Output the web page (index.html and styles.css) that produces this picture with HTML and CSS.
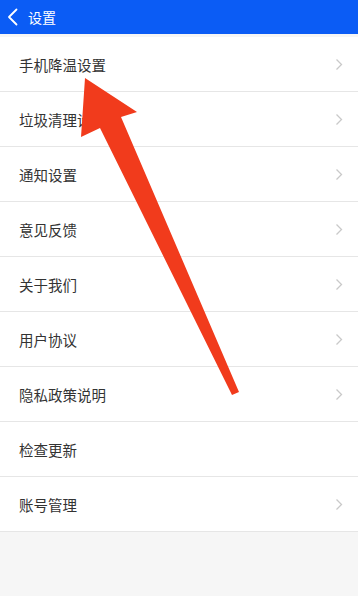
FILE: index.html
```html
<!DOCTYPE html>
<html lang="zh">
<head>
<meta charset="utf-8">
<title>设置</title>
<link rel="stylesheet" href="styles.css">
</head>
<body>
<div class="screen">
  <header class="topbar">
    <svg class="back" width="12" height="18" viewBox="0 0 12 18"><polyline points="9.5,1.5 2,9 9.5,16.5" fill="none" stroke="#fff" stroke-width="1.8" stroke-linecap="round" stroke-linejoin="round"/></svg>
    <span class="title">设置</span>
  </header>
  <ul class="list">
    <li class="row"><span>手机降温设置</span><svg class="chev" width="8" height="13" viewBox="0 0 8 13"><polyline points="1.5,1.5 6.5,6.5 1.5,11.5" fill="none" stroke="#c9c9c9" stroke-width="1.3"/></svg></li>
    <li class="row"><span>垃圾清理设置</span><svg class="chev" width="8" height="13" viewBox="0 0 8 13"><polyline points="1.5,1.5 6.5,6.5 1.5,11.5" fill="none" stroke="#c9c9c9" stroke-width="1.3"/></svg></li>
    <li class="row"><span>通知设置</span><svg class="chev" width="8" height="13" viewBox="0 0 8 13"><polyline points="1.5,1.5 6.5,6.5 1.5,11.5" fill="none" stroke="#c9c9c9" stroke-width="1.3"/></svg></li>
    <li class="row"><span>意见反馈</span><svg class="chev" width="8" height="13" viewBox="0 0 8 13"><polyline points="1.5,1.5 6.5,6.5 1.5,11.5" fill="none" stroke="#c9c9c9" stroke-width="1.3"/></svg></li>
    <li class="row"><span>关于我们</span><svg class="chev" width="8" height="13" viewBox="0 0 8 13"><polyline points="1.5,1.5 6.5,6.5 1.5,11.5" fill="none" stroke="#c9c9c9" stroke-width="1.3"/></svg></li>
    <li class="row"><span>用户协议</span><svg class="chev" width="8" height="13" viewBox="0 0 8 13"><polyline points="1.5,1.5 6.5,6.5 1.5,11.5" fill="none" stroke="#c9c9c9" stroke-width="1.3"/></svg></li>
    <li class="row"><span>隐私政策说明</span><svg class="chev" width="8" height="13" viewBox="0 0 8 13"><polyline points="1.5,1.5 6.5,6.5 1.5,11.5" fill="none" stroke="#c9c9c9" stroke-width="1.3"/></svg></li>
    <li class="row"><span>检查更新</span></li>
    <li class="row"><span>账号管理</span><svg class="chev" width="8" height="13" viewBox="0 0 8 13"><polyline points="1.5,1.5 6.5,6.5 1.5,11.5" fill="none" stroke="#c9c9c9" stroke-width="1.3"/></svg></li>
  </ul>
  <svg class="arrow" width="358" height="596" viewBox="0 0 358 596"><polygon points="85,78 137,112 121,117 239,392 232,395 100,128 81,137" fill="#f13b1c"/></svg>
</div>
</body>
</html>
```
FILE: styles.css
```css
html, body {
  margin: 0;
  padding: 0;
}
body {
  width: 358px;
  height: 596px;
  background: #f6f6f6;
  font-family: "Noto Sans CJK SC", "Noto Sans", sans-serif;
  overflow: hidden;
}
.screen {
  position: relative;
  width: 358px;
  height: 596px;
  background: #f6f6f6;
}
.topbar {
  height: 34px;
  background: #0b5cf5;
  display: flex;
  align-items: center;
  padding-left: 7px;
  gap: 9px;
  box-sizing: border-box;
}
.back {
  display: block;
}
.title {
  color: #fff;
  font-size: 14px;
  line-height: 1;
  padding-bottom: 1px;
}
.list {
  list-style: none;
  margin: 3px 0 0 0;
  padding: 0;
  background: #fff;
}
.row {
  height: 54px;
  border-bottom: 1px solid #e6e6e6;
  display: flex;
  align-items: center;
  justify-content: space-between;
  padding: 0 15px 0 19px;
  font-size: 14.5px;
  color: #333;
}
.chev {
  display: block;
}
.arrow {
  position: absolute;
  left: 0;
  top: 0;
  pointer-events: none;
}
```
